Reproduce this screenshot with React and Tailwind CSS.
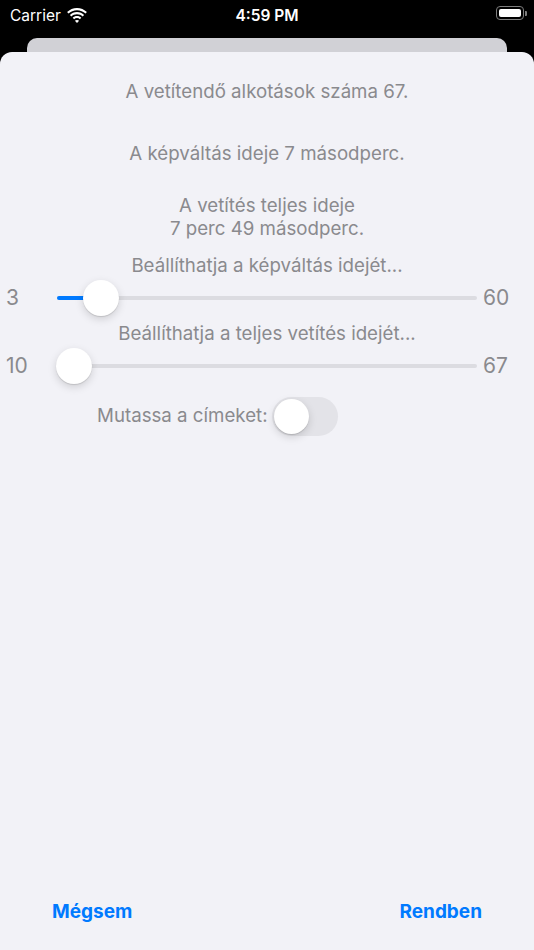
import React from 'react';

const font = { fontFamily: 'Inter, "Noto Sans", sans-serif' };

function Wifi() {
  return (
    <svg width="20" height="15" viewBox="0 0 20 15" fill="white">
      <path d="M10 2.2c3.3 0 6.3 1.3 8.5 3.4l1.4-1.5C17.3 1.6 13.8 0 10 0S2.7 1.6.1 4.1l1.4 1.5C3.7 3.5 6.7 2.2 10 2.2z" />
      <path d="M10 6.2c2.2 0 4.2.9 5.7 2.3l1.4-1.5C15.3 5.1 12.8 4 10 4S4.7 5.1 2.9 7l1.4 1.5C5.8 7.1 7.8 6.2 10 6.2z" />
      <path d="M10 10.1c1.1 0 2.1.4 2.9 1.1l1.4-1.5C13.2 8.7 11.7 8 10 8s-3.2.7-4.3 1.7l1.4 1.5c.8-.7 1.8-1.1 2.9-1.1z" />
      <path d="M10 15l2.1-2.2c-.6-.5-1.300-.8-2.1-.8s-1.5.3-2.1.8z" />
    </svg>
  );
}

function Battery() {
  return (
    <div className="flex items-center">
      <div className="w-[28px] h-[14px] rounded-[4px] border border-[#7d7d7d] p-[2px]">
        <div className="w-full h-full bg-white rounded-[2px]" />
      </div>
      <div className="w-[2px] h-[5px] bg-[#7d7d7d] rounded-r-[1px] ml-[1px]" />
    </div>
  );
}

function Slider({ min, max, thumbX, fill }) {
  return (
    <div className="flex items-center h-[36px] text-[21px] text-[#8a8a8e]">
      <div className="w-[57px] pl-[6px]">{min}</div>
      <div className="relative w-[420px] h-[4px] rounded-full bg-[#dcdce1]">
        {fill && <div className="absolute left-0 top-0 h-[4px] rounded-full bg-[#007aff]" style={{ width: fill }} />}
        <div
          className="absolute top-[-16px] w-[36px] h-[36px] rounded-full bg-white shadow-[0_3px_8px_rgba(0,0,0,0.15),0_1px_1px_rgba(0,0,0,0.12)]"
          style={{ left: thumbX - 57 - 18 }}
        />
      </div>
      <div className="ml-[6px]">{max}</div>
    </div>
  );
}

export default function App() {
  return (
    <div className="w-[534px] h-[950px] bg-black overflow-hidden flex flex-col" style={font}>
      {/* Status bar */}
      <div className="relative h-[38px] text-white text-[15.5px]">
        <div className="absolute left-[10px] top-[4px] flex items-center gap-[6px]">
          <span>Carrier</span>
          <Wifi />
        </div>
        <div className="absolute left-0 right-0 top-[4px] text-center font-semibold">4:59 PM</div>
        <div className="absolute left-[496px] top-[6px]">
          <Battery />
        </div>
      </div>
      <div className="mx-[27px] h-[14px] rounded-t-[10px] bg-[#d1d1d6]" />

      {/* Sheet */}
      <div className="flex-1 bg-[#f2f2f7] rounded-t-[12px] flex flex-col">
        <div className="flex flex-col items-center text-[18.7px] leading-[22px] text-[#8a8a8e] pt-[29px]">
          <p>A vetítendő alkotások száma 67.</p>
          <p className="mt-[40px]">A képváltás ideje 7 másodperc.</p>
          <p className="mt-[29px] text-center leading-[23px]">A vetítés teljes ideje<br />7 perc 49 másodperc.</p>
          <p className="mt-[15px]">Beállíthatja a képváltás idejét...</p>
        </div>
        <div className="mt-[3px]">
          <Slider min="3" max="60" thumbX={101} fill={30} />
        </div>
        <p className="mt-[7px] text-center text-[18.7px] leading-[22px] text-[#8a8a8e]">Beállíthatja a teljes vetítés idejét...</p>
        <div className="mt-[3px]">
          <Slider min="10" max="67" thumbX={74} />
        </div>
        <div className="mt-[13px] flex items-center pl-[97px] gap-[4px]">
          <span className="text-[18.7px] text-[#8a8a8e]">Mutassa a címeket:</span>
          <div className="w-[66px] h-[39px] rounded-full bg-[#e3e3e8] p-[2px]">
            <div className="w-[35px] h-[35px] rounded-full bg-white shadow-[0_3px_8px_rgba(0,0,0,0.15),0_1px_1px_rgba(0,0,0,0.12)]" />
          </div>
        </div>

        <div className="flex-1" />
        <div className="flex justify-between px-[52px] pb-[24px] text-[19px] font-bold text-[#007aff]">
          <button>Mégsem</button>
          <button>Rendben</button>
        </div>
      </div>
    </div>
  );
}
